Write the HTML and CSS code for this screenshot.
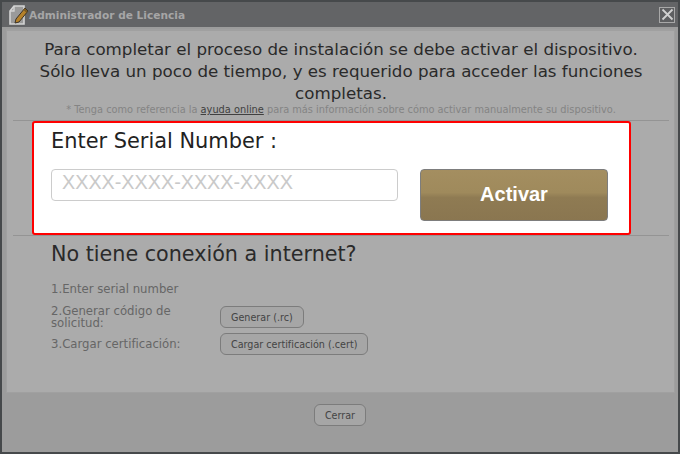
FILE: index.html
```html
<!DOCTYPE html>
<html lang="es">
<head>
    <meta charset="UTF-8">
    <title>Administrador de Licencia</title>
    <link rel="stylesheet" href="styles.css">
</head>
<body>
    <div class="dialog">
        <div class="titlebar">
            <svg class="title-icon" width="22" height="24" viewBox="0 0 22 24">
                <path d="M7 3 L17 3 L17 21 L3 21 L3 8 Z" fill="#9a9a9a" stroke="#d4d4d4" stroke-width="1.6"/>
                <path d="M7 3 L7 8 L3 8" fill="none" stroke="#d4d4d4" stroke-width="1.4"/>
                <path d="M9 16 L18 5 L21 8 L12 19 L8 20 Z" fill="#b5812a" stroke="#3b3226" stroke-width="1"/>
                <path d="M17 6 L20 9" stroke="#7a5a20" stroke-width="2"/>
            </svg>
            <span class="title-text">Administrador de Licencia</span>
            <button class="close-btn" aria-label="Cerrar">
                <svg width="13" height="13" viewBox="0 0 13 13">
                    <path d="M1.5 1.5 L11.5 11.5 M11.5 1.5 L1.5 11.5" stroke="#d0d0d0" stroke-width="1.8"/>
                </svg>
            </button>
        </div>

        <div class="content">
            <p class="intro">Para completar el proceso de instalación se debe activar el dispositivo. Sólo lleva un poco de tiempo, y es requerido para acceder las funciones completas.</p>
            <p class="note">* Tenga como referencia la <a href="#">ayuda online</a> para más información sobre cómo activar manualmente su dispositivo.</p>

            <div class="rule"></div>
            <div class="serial-box">
                <h2 class="serial-title">Enter Serial Number :</h2>
                <div class="serial-row">
                    <input class="serial-input" type="text" placeholder="XXXX-XXXX-XXXX-XXXX">
                    <button class="activate-btn">Activar</button>
                </div>
            </div>
            <div class="rule"></div>

            <div class="offline">
                <h2 class="offline-title">No tiene conexión a internet?</h2>
                <div class="step step-first">
                    <div class="step-label">1.Enter serial number</div>
                </div>
                <div class="step">
                    <div class="step-label">2.Generar código de solicitud:</div>
                    <button class="btn">Generar (.rc)</button>
                </div>
                <div class="step">
                    <div class="step-label">3.Cargar certificación:</div>
                    <button class="btn">Cargar certificación (.cert)</button>
                </div>
            </div>
        </div>

        <div class="footer">
            <button class="btn">Cerrar</button>
        </div>
    </div>
</body>
</html>
```

FILE: styles.css
```css
html, body {
    margin: 0;
    height: 100%;
}
body {
    font-family: "DejaVu Sans", Verdana, sans-serif;
    overflow: hidden;
}
.dialog {
    box-sizing: border-box;
    width: 680px;
    height: 454px;
    display: flex;
    flex-direction: column;
    background: #9c9c9c;
    border: 2px solid #46494b;
}
.titlebar {
    height: 25px;
    flex: none;
    display: flex;
    align-items: center;
    padding: 0 3px 0 5px;
    background: #636466;
}
.title-icon {
    flex: none;
}
.title-text {
    font-size: 10.6px;
    font-weight: bold;
    color: #a6a6a6;
}
.close-btn {
    margin-left: auto;
    width: 16px;
    height: 16px;
    padding: 0;
    display: flex;
    align-items: center;
    justify-content: center;
    background: #5e5f61;
    border: 1px solid #a8a8a8;
}
.content {
    height: 364px;
    flex: none;
    box-sizing: border-box;
    margin: 2px 3px 0 4px;
    padding: 7px 5px 0 6px;
    background: #ababab;
    border: 1px solid #a0a0a0;
    border-top: 2px solid #a0a0a0;
}
.intro {
    margin: 0;
    padding: 0 18px;
    font-size: 16.7px;
    line-height: 22px;
    text-align: center;
    color: #2a2a2a;
}
.note {
    margin: -1px 0 4px;
    font-size: 9.8px;
    line-height: 13px;
    text-align: center;
    color: #848484;
}
.note a {
    color: #404040;
}
.rule {
    height: 1px;
    background: #949494;
}
.serial-box {
    box-sizing: border-box;
    height: 114px;
    margin: 0 38px 0 19px;
    padding: 5px 21px 0 17px;
    background: #fff;
    border: 2px solid #f00;
    border-radius: 3px;
}
.serial-title {
    margin: 0;
    font-size: 20.9px;
    line-height: 26px;
    font-weight: normal;
    color: #222;
}
.serial-row {
    display: flex;
    align-items: flex-start;
    margin-top: 15px;
}
.serial-input {
    box-sizing: border-box;
    width: 347px;
    height: 32px;
    padding: 0 10px 6px;
    font-family: "Liberation Sans", Arial, sans-serif;
    font-size: 19.8px;
    background: #fff;
    border: 1px solid #ccc;
    border-radius: 4px;
}
.serial-input::placeholder {
    color: #c9c9c9;
    opacity: 1;
}
.activate-btn {
    box-sizing: border-box;
    width: 188px;
    height: 52px;
    margin-left: 22px;
    padding-bottom: 3px;
    font-family: "Liberation Sans", Arial, sans-serif;
    font-size: 20px;
    font-weight: bold;
    color: #fff;
    background: linear-gradient(#a48e60 0%, #9f8a5c 45%, #8f7b53 55%, #8a7650 100%);
    border: 1px solid #7d7d7d;
    border-radius: 4px;
}
.offline {
    padding-left: 38px;
}
.offline-title {
    margin: 5px 0 0;
    font-size: 20.7px;
    line-height: 26px;
    font-weight: normal;
    color: #2a2a2a;
}
.step {
    display: flex;
    align-items: center;
    margin-top: 4px;
}
.step-first {
    margin-top: 16px;
    margin-bottom: 10px;
}
.step-label {
    width: 169px;
    font-size: 11.7px;
    line-height: 12px;
    color: #666;
}
.btn {
    box-sizing: border-box;
    height: 22px;
    padding: 0 10px;
    font-family: "DejaVu Sans", Verdana, sans-serif;
    font-size: 9.6px;
    color: #444;
    background: #a6a6a6;
    border: 1px solid #7c7c7c;
    border-radius: 6px;
}
.footer {
    flex: 1;
    display: flex;
    justify-content: center;
    align-items: flex-start;
    padding-top: 11px;
}
```
